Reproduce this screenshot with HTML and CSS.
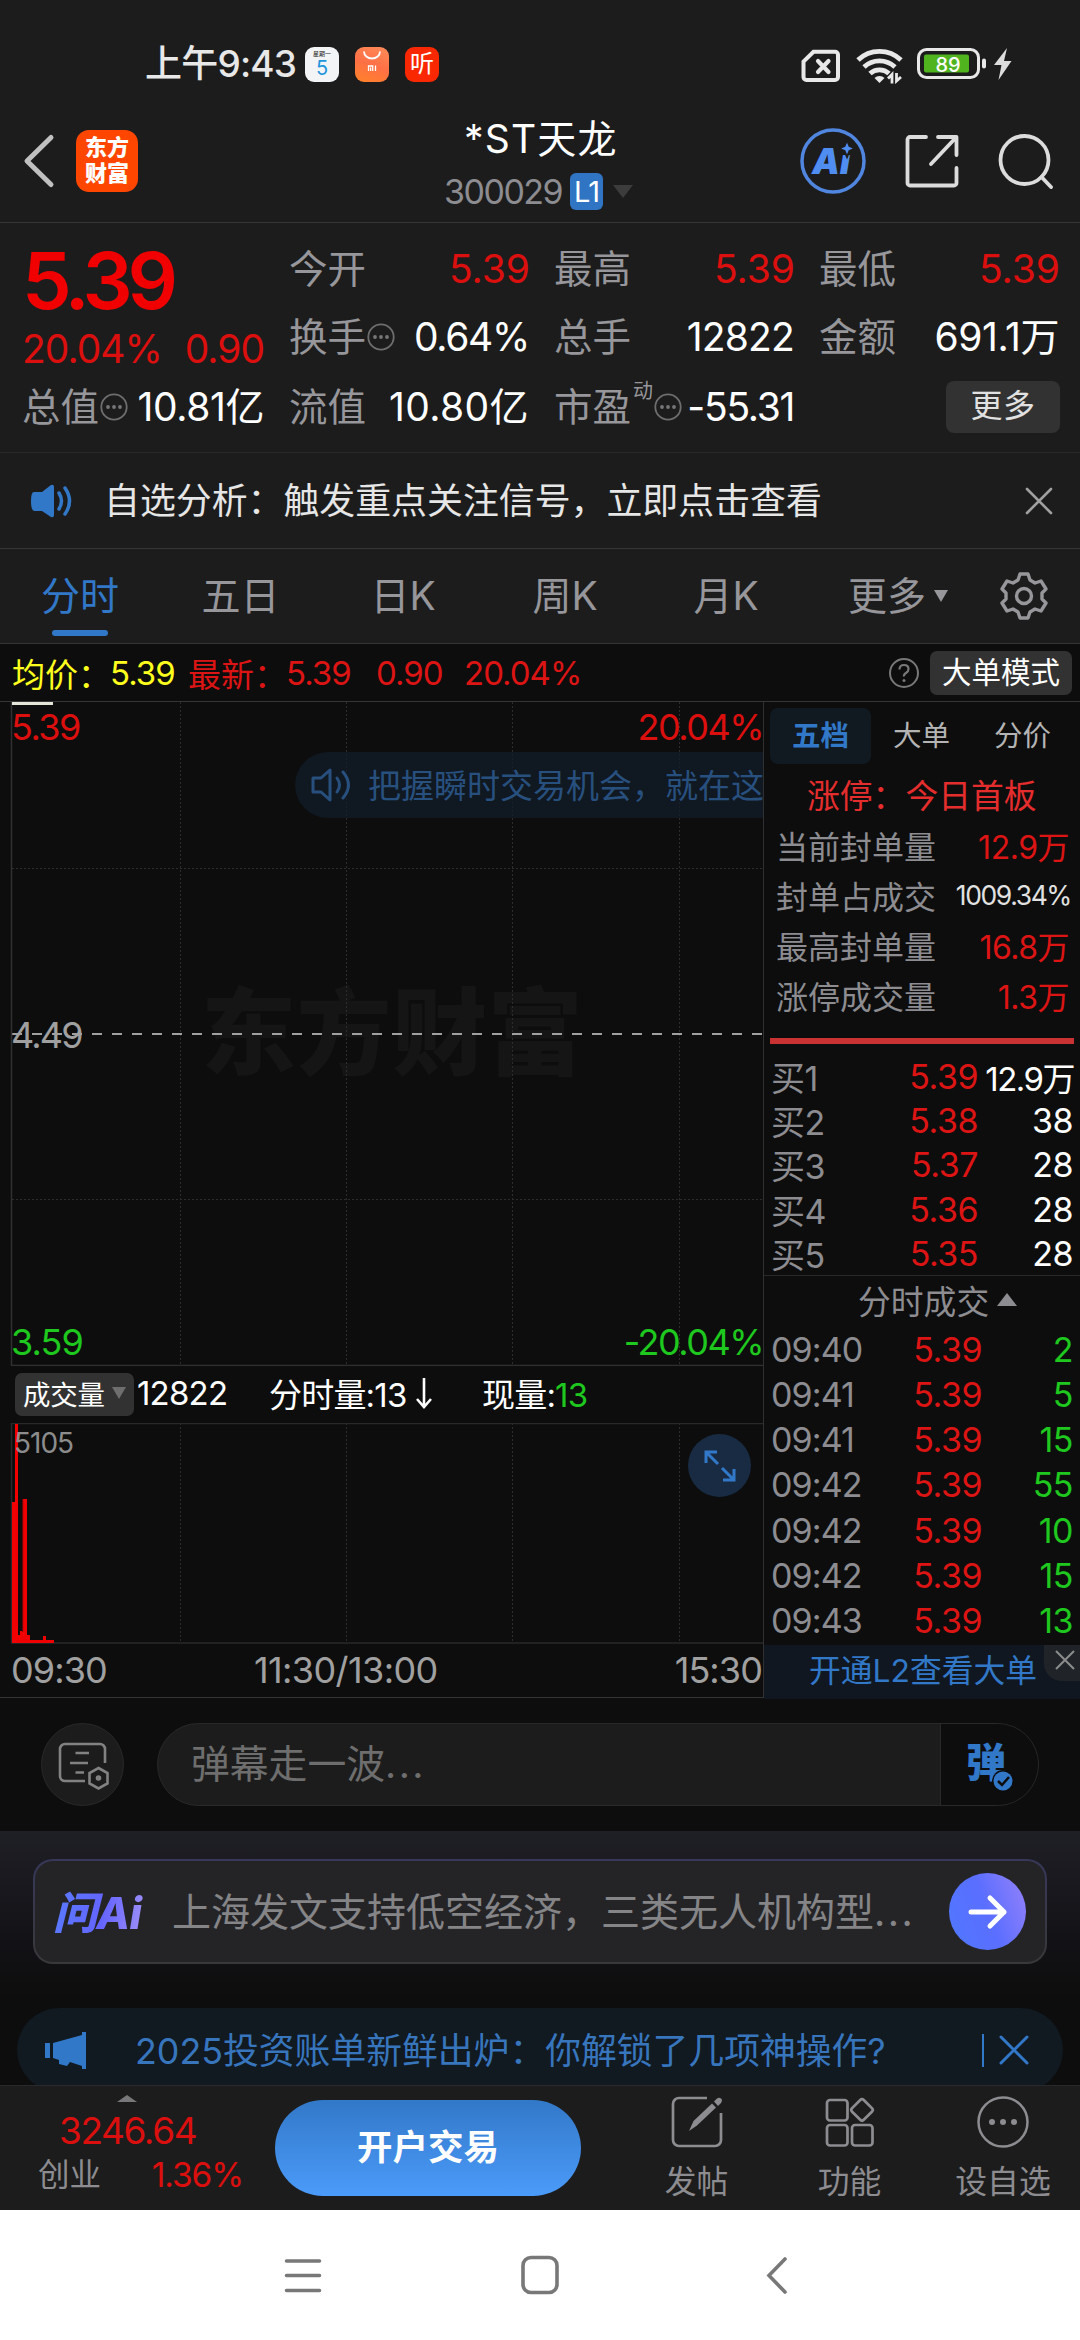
FILE: index.html
```html
<!DOCTYPE html>
<html lang="zh-CN">
<head>
<meta charset="utf-8">
<title>*ST天龙 300029</title>
<link rel="stylesheet" href="styles.css">
</head>
<body>
<div class="screen">

  <div class="status">
    <span class="clock">上午9:43</span>
    <span class="app cal"><i>星期一</i><b>5</b></span>
    <span class="app mi"><svg width="34" height="35" viewBox="0 0 34 35"><path d="M9 4.500a8 7 0 0 0 16 0" fill="none" stroke="#fff" stroke-width="1.800"/><path d="M13.500 24v-5h4.200v5M15.600 20.500v3.500M20.500 18.500v5.500" fill="none" stroke="#fff" stroke-width="1.300"/></svg></span>
    <span class="app ting">听</span>
    <svg class="st-icons" width="215" height="40" viewBox="0 0 215 40" fill="none">
      <path d="M12.500 7.700H34a3 3 0 0 1 3 3V33a3 3 0 0 1-3 3H5.500a3 3 0 0 1-3-3V17.500z" stroke="#e8e8e8" stroke-width="4"/>
      <path d="M17 17l10.500 11M27.500 17L17 28" stroke="#e8e8e8" stroke-width="4.200" stroke-linecap="round"/>
      <g stroke="#e8e8e8" stroke-width="4.800"><path d="M57 16a31 31 0 0 1 43 0M63 23a22.500 22.500 0 0 1 31 0M69 29.500a14 14 0 0 1 19 0"/></g>
      <path d="M73.500 34a7 7 0 0 1 10 0l-5 5z" fill="#e8e8e8"/>
      <path d="M87 34.500l4-4v9M100 33l-4.500 4V29" stroke="#e8e8e8" stroke-width="2.800"/>
      <rect x="117.500" y="5.500" width="60" height="28" rx="8" stroke="#e8e8e8" stroke-width="3"/>
      <rect x="123" y="10.500" width="45" height="18" rx="2" fill="#50b41e"/>
      <rect x="181" y="14.500" width="4" height="10" rx="2" fill="#e8e8e8"/>
      <path d="M206 4L193 21h7.500l-3 15 13-19h-7.500z" fill="#dcdcdc"/>
      <text x="147" y="27.500" text-anchor="middle" class="bat">89</text>
    </svg>
  </div>

  <div class="head">
    <svg class="back" width="34" height="60" viewBox="0 0 34 60"><path d="M30 7.500L6 31l24 23.500" fill="none" stroke="#c0c0c0" stroke-width="5" stroke-linecap="round" stroke-linejoin="round"/></svg>
    <div class="brand"><span>东方</span><span>财富</span></div>
    <div class="title">
      <div class="name">*ST天龙</div>
      <div class="code"><span>300029</span><b>L1</b><svg width="20" height="13"><path d="M0 0h20L10 13z" fill="#3c3c3c"/></svg></div>
    </div>
    <div class="actions">
      <svg width="66" height="66" viewBox="0 0 66 66"><circle cx="33" cy="33" r="31" fill="none" stroke="#5086e0" stroke-width="3.500"/><text x="12" y="46" class="ai">Ai</text><path d="M47 12l2.500 6 6 2.500-6 2.500-2.500 6-2.500-6-6-2.500 6-2.500z" fill="#508df0" stroke="#1c1c1c" stroke-width="2"/></svg>
      <svg width="54" height="56" viewBox="0 0 54 56" fill="none" stroke="#dcdcdc" stroke-width="3.800" stroke-linecap="round" stroke-linejoin="round"><path d="M21 4H5a2.500 2.500 0 0 0-2.500 2.500V50A2.500 2.500 0 0 0 5 52.500h44a2.500 2.500 0 0 0 2.500-2.500V35M33 4h18.500v18M51 4.500L26 31"/></svg>
      <svg width="56" height="56" viewBox="0 0 56 56" fill="none" stroke="#dcdcdc" stroke-width="3.800" stroke-linecap="round"><circle cx="26.500" cy="27" r="24"/><path d="M43.500 44L53 54"/></svg>
    </div>
  </div>

  <div class="quote">
    <div class="qcol first">
      <div class="price">5.39</div>
      <div class="chg"><span>20.04%</span><span>0.90</span></div>
      <div class="kv"><span>总值<svg class="dots" viewBox="0 0 28 28"><use href="#more"/></svg></span><b class="t2">10.81亿</b></div>
    </div>
    <div class="qcol">
      <div class="kv"><span>今开</span><b class="red">5.39</b></div>
      <div class="kv"><span>换手<svg class="dots" viewBox="0 0 28 28"><use href="#more"/></svg></span><b class="t1">0.64%</b></div>
      <div class="kv"><span>流值</span><b class="t3">10.80亿</b></div>
    </div>
    <div class="qcol">
      <div class="kv"><span>最高</span><b class="red">5.39</b></div>
      <div class="kv"><span>总手</span><b>12822</b></div>
      <div class="kv"><span>市盈<sup>动</sup><svg class="dots" viewBox="0 0 28 28"><use href="#more"/></svg></span><b class="t1">-55.31</b></div>
    </div>
    <div class="qcol">
      <div class="kv"><span>最低</span><b class="red">5.39</b></div>
      <div class="kv"><span>金额</span><b class="t2">691.1万</b></div>
      <div class="kv end"><em>更多</em></div>
    </div>
  </div>

  <div class="banner">
    <svg width="44" height="36" viewBox="0 0 44 36"><path d="M3 9h8L20 2q3-1 3 2v28q0 3-3 2L11 28H3Q0 27 0 18T3 9z" fill="#3278c8"/><path d="M28 10q5 8 0 16M34 5q9 13 0 26" fill="none" stroke="#3278c8" stroke-width="3.500" stroke-linecap="round"/></svg>
    <p>自选分析：触发重点关注信号，立即点击查看</p>
    <svg width="28" height="28" viewBox="0 0 28 28"><path d="M2 2l24 24M26 2L2 26" stroke="#a0a0a0" stroke-width="2.600" stroke-linecap="round"/></svg>
  </div>

  <div class="tabs">
    <div class="tab on">分时</div><div class="tab">五日</div><div class="tab">日K</div><div class="tab">周K</div><div class="tab">月K</div>
    <div class="tab more">更多<svg width="14" height="12"><path d="M0 0h14L7 12z" fill="#96969b"/></svg></div>
    <svg class="gear" width="48" height="50" viewBox="0 0 48 50" fill="none" stroke="#96969b" stroke-width="3.400" stroke-linejoin="round"><path d="M20 3h8l2 6 5 3 6-2 5 8-4 4v6l4 4-5 8-6-2-5 3-2 6h-8l-2-6-5-3-6 2-5-8 4-4v-6l-4-4 5-8 6 2 5-3z"/><circle cx="24" cy="25" r="7.500"/></svg>
  </div>

  <div class="info">
    <span class="yel">均价：</span><span class="yel n">5.39</span>
    <span class="lab">最新：</span><span class="n w2">5.39</span><span class="n w3">0.90</span><span class="n">20.04%</span>
    <svg class="help" width="32" height="32" viewBox="0 0 32 32"><circle cx="16" cy="16" r="14" fill="none" stroke="#787878" stroke-width="2"/><path d="M11.500 12.500q0-4.500 4.500-4.500t4.500 4q0 2.500-2.500 4t-2 3.500" fill="none" stroke="#787878" stroke-width="2.200"/><circle cx="16" cy="23.500" r="1.500" fill="#787878"/></svg>
    <em>大单模式</em>
  </div>

  <div class="main">
    <div class="left">
      <div class="chart">
        <div class="mark">东方财富</div>
        <svg class="grid" width="764" height="664" viewBox="0 0 764 664">
          <path d="M180.500 0v664M346.500 0v664M512.500 0v664M679.500 0v664M12 166.500h751M12 497.500h751" stroke="#2d2d2f" stroke-dasharray="2 2"/>
          <path d="M12 332h750" stroke="#a0a0a0" stroke-width="2" stroke-dasharray="10 10"/>
          <path d="M11.500 0v663.500H763" fill="none" stroke="#303032" stroke-width="1.500"/>
          <path d="M12 1.500h41" stroke="#e4e4d8" stroke-width="3"/>
        </svg>
        <div class="tip">
          <svg width="42" height="36" viewBox="0 0 42 36" fill="none" stroke="#28507f" stroke-width="3" stroke-linejoin="round" stroke-linecap="round"><path d="M2 11h8l9-8v30l-9-8H2zM26 11q5 7 0 14M32 5q11 13 0 26"/></svg>
          <span>把握瞬时交易机会，就在这</span>
        </div>
        <span class="lb tl">5.39</span><span class="lb tr">20.04%</span><span class="lb ml">4.49</span><span class="lb bl">3.59</span><span class="lb br">-20.04%</span>
      </div>
      <div class="volhead">
        <em>成交量<svg width="14" height="12"><path d="M0 0h14L7 12z" fill="#6e6e6e"/></svg></em>
        <span class="v1">12822</span><span class="v2">分时量:13<svg width="18" height="32" viewBox="0 0 18 32"><path d="M9 1v28M2 22l7 8 7-8" fill="none" stroke="#fff" stroke-width="2.600"/></svg></span><span class="v3">现量:<i>13</i></span>
      </div>
      <div class="vol">
        <svg class="grid" width="764" height="221" viewBox="0 0 764 221">
          <path d="M180.500 0v220M346.500 0v220M512.500 0v220M679.500 0v220" stroke="#2d2d2f" stroke-dasharray="2 2"/>
          <path d="M11.500 .5H763M11.500 0v220H763" fill="none" stroke="#29292b" stroke-width="1.500"/>
          <path d="M12 220V79h3V1h3v211h2v-4h3V76h4v136h3v5h13v-4h3v4h8v3z" fill="#f00000"/>
          <path d="M22.700 76v133" stroke="#7a0606" stroke-width="1"/>
        </svg>
        <span class="vmax">5105</span>
        <span class="expand"><svg width="32" height="32" viewBox="0 0 32 32" fill="none" stroke="#3278c8" stroke-width="3"><path d="M13 2H2v11M3 3l11 11M19 30h11V19M29 29L18 18"/></svg></span>
      </div>
      <div class="axis"><span>09:30</span><span class="mid">11:30/13:00</span><span>15:30</span></div>
    </div>

    <div class="right">
      <div class="rtabs"><b>五档</b><span>大单</span><span>分价</span></div>
      <div class="limit">涨停：今日首板</div>
      <div class="srow"><span>当前封单量</span><b>12.9万</b></div>
      <div class="srow"><span>封单占成交</span><b class="sm">1009.34%</b></div>
      <div class="srow"><span>最高封单量</span><b>16.8万</b></div>
      <div class="srow"><span>涨停成交量</span><b>1.3万</b></div>
      <div class="bar"></div>
      <div class="bids">
        <div><span>买1</span><i>5.39</i><b class="t1">12.9万</b></div>
        <div><span>买2</span><i>5.38</i><b>38</b></div>
        <div><span>买3</span><i>5.37</i><b>28</b></div>
        <div><span>买4</span><i>5.36</i><b>28</b></div>
        <div><span>买5</span><i>5.35</i><b>28</b></div>
      </div>
      <div class="thead">分时成交<svg width="20" height="13"><path d="M10 0l10 13H0z" fill="#8c8c91"/></svg></div>
      <div class="trades">
        <div><span>09:40</span><i>5.39</i><b>2</b></div>
        <div><span>09:41</span><i>5.39</i><b>5</b></div>
        <div><span>09:41</span><i>5.39</i><b>15</b></div>
        <div><span>09:42</span><i>5.39</i><b>55</b></div>
        <div><span>09:42</span><i>5.39</i><b>10</b></div>
        <div><span>09:42</span><i>5.39</i><b>15</b></div>
        <div><span>09:43</span><i>5.39</i><b>13</b></div>
      </div>
      <div class="l2">开通L2查看大单<span><svg width="20" height="20" viewBox="0 0 20 20"><path d="M1 1l18 18M19 1L1 19" stroke="#8c8c8c" stroke-width="2"/></svg></span></div>
    </div>
  </div>

  <div class="danmu">
    <div class="round"><svg width="52" height="48" viewBox="0 0 52 48" fill="none" stroke="#828282" stroke-width="2.600"><path d="M47 21V7a5 5 0 0 0-5-5H7a5 5 0 0 0-5 5v27a5 5 0 0 0 5 5h20" /><path d="M17.500 11H31M12 21h18M17.500 30.500H26"/><path d="M40.500 26l9 5v10.500l-9 5-9-5V31z"/><circle cx="40.500" cy="36" r="1.500"/></svg></div>
    <div class="field"><span>弹幕走一波<i class="el">...</i></span>
      <div class="send"><b>弹</b><svg width="22" height="22" viewBox="0 0 22 22"><circle cx="11" cy="11" r="11" fill="#0d0d0d"/><circle cx="11" cy="11" r="9.500" fill="#3278c8"/><path d="M6 11l4 4 7-8" fill="none" stroke="#0d0d0d" stroke-width="2.500"/></svg></div>
    </div>
  </div>

  <div class="ask">
    <div class="askbox">
      <b>问Ai</b><p>上海发文支持低空经济，三类无人机构型<i class="el">...</i></p>
      <span class="go"><svg width="40" height="36" viewBox="0 0 40 36" fill="none" stroke="#fff" stroke-width="5" stroke-linecap="round" stroke-linejoin="round"><path d="M3 18h33M22 4l14 14-14 14"/></svg></span>
    </div>
  </div>

  <div class="noticewrap">
    <div class="notice">
      <svg width="42" height="37" viewBox="0 0 42 37" fill="#3278c8"><path d="M0 11h5v15H0zM8 11L37 3V0h4v37h-4v-3L25 30l-3 4-8-2v-4l-6-2z"/></svg>
      <p>2025投资账单新鲜出炉：你解锁了几项神操作?</p>
      <i></i><svg width="30" height="30" viewBox="0 0 30 30"><path d="M2 2l26 26M28 2L2 28" stroke="#3278c8" stroke-width="3" stroke-linecap="round"/></svg>
    </div>
  </div>

  <div class="dock">
    <div class="index">
      <svg width="20" height="7"><path d="M10 0l10 7H0z" fill="#78787a"/></svg>
      <div class="iv">3246.64</div>
      <div class="ip"><span>创业</span><b>1.36%</b></div>
    </div>
    <div class="cta">开户交易</div>
    <div class="act a1"><svg width="52" height="52" viewBox="0 0 52 52" fill="none" stroke="#8c8c91" stroke-width="2.700"><path d="M36 2H8a6 6 0 0 0-6 6v36a6 6 0 0 0 6 6h36a6 6 0 0 0 6-6V17"/><path d="M18 35l4.500-10L41 7.500l4 4-19 18z" fill="#8c8c91" stroke="none"/><path d="M43 5.500l3-3q2-1.500 4 0t0 4.500l-3 3z" fill="#8c8c91" stroke="none"/></svg><span>发帖</span></div>
    <div class="act a2"><svg width="50" height="52" viewBox="0 0 50 52" fill="none" stroke="#8c8c91" stroke-width="2.700"><rect x="2" y="4" width="20.500" height="20.500" rx="3"/><rect x="2" y="29" width="20.500" height="20.500" rx="3"/><rect x="27" y="29" width="20.500" height="20.500" rx="3"/><rect x="28.700" y="5.700" width="16.500" height="16.500" rx="2.500" transform="rotate(45 37 14)"/></svg><span>功能</span></div>
    <div class="act a3"><svg width="52" height="52" viewBox="0 0 52 52"><circle cx="26" cy="26" r="24.500" fill="none" stroke="#8c8c91" stroke-width="2.500"/><g fill="#8c8c91"><circle cx="15" cy="26" r="3"/><circle cx="26" cy="26" r="3"/><circle cx="37" cy="26" r="3"/></g></svg><span>设自选</span></div>
  </div>

  <div class="nav">
    <svg width="40" height="40" viewBox="0 0 40 40" fill="none" stroke="#787878" stroke-width="3.600" stroke-linecap="round"><path d="M3.500 6h33M3.500 20.500h33M3.500 35.500h33"/></svg>
    <svg width="40" height="40" viewBox="0 0 40 40" fill="none" stroke="#787878" stroke-width="3.600"><rect x="3" y="2.500" width="34" height="35" rx="8"/></svg>
    <svg width="40" height="40" viewBox="0 0 40 40" fill="none" stroke="#787878" stroke-width="3.600" stroke-linecap="round"><path d="M28 4L12 20.500 28 37"/></svg>
  </div>
</div>

<svg width="0" height="0" class="defs"><defs><g id="more"><circle cx="14" cy="14" r="12.700" fill="none" stroke="#6e6e70" stroke-width="1.800"/><circle cx="8" cy="14" r="1.900" fill="#77777a"/><circle cx="14" cy="14" r="1.900" fill="#77777a"/><circle cx="20" cy="14" r="1.900" fill="#77777a"/></g></defs></svg>
</body>
</html>
```
FILE: styles.css
```css
* { box-sizing: border-box; margin: 0; padding: 0; }
body { background: #0d0d0d; font-family: Inter, "Noto Sans CJK SC", sans-serif; color: #fff; }
b, em, i { font-weight: 400; font-style: normal; }
svg { display: block; flex: none; }
.defs { position: absolute; }
.screen { width: 1080px; height: 2340px; overflow: hidden; display: flex; flex-direction: column; white-space: nowrap; }
.screen > div { flex: none; }

.status { height: 100px; padding: 28px 0 0 145px; background: #1c1c1c; display: flex; align-items: center; }
.status > * { flex: none; }
.clock { width: 160px; font-size: 37px; line-height: 40px; font-weight: 500; color: #e8e8e8; letter-spacing: -.8px; }
.app { width: 34px; height: 35px; margin-right: 16px; border-radius: 9px; overflow: hidden; display: flex; flex-direction: column; align-items: center; }
.cal { background: #f2f4f6; }
.cal i { font-size: 6px; line-height: 8px; margin-top: 3px; color: #222; }
.cal b { font-size: 20px; line-height: 20px; color: #1e96dc; }
.mi { background: linear-gradient(20deg, #ff8228, #ff7046 50%, #ff8c5a); }
.ting { background: #fa2800; font-size: 24px; line-height: 33px; }
.st-icons { margin-left: 346px; }
.bat { font: 500 20px Inter, sans-serif; fill: #fff; }

.head { height: 123px; background: #1c1c1c; border-bottom: 1px solid #353537; display: grid; grid-template-columns: 21px 55px 62px 307px 190px 1fr; }
.back { grid-column: 2; align-self: start; margin-top: 30px; }
.brand { grid-column: 3; width: 62px; height: 62px; margin-top: 30px; padding-top: 4px; border-radius: 13px; background: #ff4600; text-align: center; font-size: 22px; line-height: 26px; font-weight: 900; }
.brand span { display: block; }
.title { grid-column: 5; padding-top: 15px; }
.name { font-size: 39px; line-height: 48px; padding-left: 19px; letter-spacing: 1.200px; }
.code { display: flex; align-items: center; height: 40px; margin-top: 8px; font-size: 34px; color: #8c8c91; letter-spacing: -1.5px; }
.code span { width: 126px; margin-left: -1px; }
.code b { width: 33px; height: 37px; line-height: 37px; border-radius: 6px; background: #3074c4; color: #fff; font-size: 29px; text-align: center; margin-right: 10px; letter-spacing: -1px; }
.actions { grid-column: 6; padding: 28px 26px 0 0; display: flex; justify-content: flex-end; gap: 39px; height: 94px; align-items: center; }
.ai { font: italic 900 35px Inter, sans-serif; fill: #508df0; letter-spacing: 0; }

.quote { height: 230px; padding: 12px 22px 0 24px; background: #1c1c1c; border-bottom: 1px solid #29292b; display: flex; gap: 25px; }
.qcol { width: 240px; flex: none; }
.first { width: 242px; margin: 0 0 0 -2px; }
.price { height: 90px; line-height: 90px; font-size: 79px; font-weight: 600; color: #f00000; letter-spacing: -5.300px; }
.chg { height: 46px; line-height: 48px; display: flex; justify-content: space-between; font-size: 39px; color: #dc0f0f; letter-spacing: -1px; }
.kv { height: 68px; display: flex; align-items: center; justify-content: space-between; font-size: 39px; line-height: 68px; letter-spacing: -.8px; }
.kv:last-child { padding-top: 3px; }
.kv span { color: #96969b; display: flex; align-items: center; font-size: 38.500px; letter-spacing: 0; }
.kv .t1 { letter-spacing: -1.3px; }
.kv .t2 { letter-spacing: -.4px; }
.kv .t3 { letter-spacing: .4px; }
.kv sup { font-size: 20px; line-height: 20px; margin: -32px 0 0 2px; align-self: center; }
.dots { width: 28px; height: 28px; margin-left: 1px; }
.kv .red { color: #dc0f0f; letter-spacing: 0; margin-right: -1px; }
.kv.end { justify-content: flex-end; padding-top: 0; }
.kv em { width: 114px; height: 52px; line-height: 50px; border-radius: 8px; background: #323232; color: #e1e1e1; text-align: center; font-size: 32px; letter-spacing: .5px; margin: 3px -1px 0 0; }

.banner { height: 96px; padding: 0 27px 0 31px; background: #1c1c1c; border-bottom: 1px solid #353537; display: flex; align-items: center; }
.banner p { flex: 1; margin: -5px 0 0 29px; font-size: 35.900px; color: #e6e6e6; }

.tabs { height: 95px; background: #1c1c1c; border-bottom: 1px solid #353537; display: grid; grid-template-columns: 160px 161px 164px 160px 162px 182px 1fr; align-items: center; }
.tab { height: 94px; line-height: 94px; text-align: center; font-size: 39px; color: #96969b; position: relative; }
.on { color: #3278c8; }
.on::after { content: ""; position: absolute; left: 52px; bottom: 7px; width: 56px; height: 6px; border-radius: 3px; background: #3278c8; }
.more { display: flex; align-items: center; justify-content: center; gap: 8px; }
.gear { margin-left: 11px; }

.info { height: 58px; padding: 0 8px 0 12px; border-bottom: 1px solid #353537; display: flex; align-items: center; font-size: 33px; color: #dc1414; }
.info .yel { color: #ffff1e; }
.info > span:first-child { width: 98px; }
.info .n { letter-spacing: -1px; }
.info .n.yel { width: 78px; }
.lab { width: 98px; }
.w2 { width: 90px; }
.w3 { width: 88px; }
.help { margin: 0 10px 0 auto; }
.info em { width: 142px; height: 44px; line-height: 42px; border-radius: 7px; background: #323232; color: #fff; text-align: center; font-size: 29.500px; }

.main { height: 996px; border-bottom: 1px solid #353537; display: flex; }
.left { width: 764px; border-right: 1px solid #303032; flex: none; }
.chart { position: relative; height: 664px; overflow: hidden; }
.mark { position: absolute; left: 201px; top: 262px; font-size: 95px; line-height: 140px; font-weight: 900; color: #151515; letter-spacing: .6px; }
.grid { position: absolute; left: 0; top: 0; }
.lb { position: absolute; font-size: 36px; line-height: 40px; letter-spacing: -1.5px; color: #dc0f0f; }
.tl { left: 11px; top: 5px; } .tr { right: 0; top: 5px; }
.ml { left: 11px; top: 313px; color: #a0a0a0; letter-spacing: -1.8px; }
.bl { left: 11px; top: 620px; color: #1ec81e; letter-spacing: -.9px; } .br { right: 0; top: 620px; color: #1ec81e; }
.tip { position: absolute; left: 295px; right: 0; top: 50px; height: 66px; border-radius: 33px 0 0 33px; background: rgba(18, 28, 40, .75); display: flex; align-items: center; padding-left: 16px; gap: 15px; font-size: 33px; color: #28507f; }
.tip span { margin-top: -3px; }
.volhead { height: 57px; display: flex; align-items: center; padding-left: 15px; font-size: 33px; letter-spacing: -.8px; }
.volhead em { width: 119px; height: 43px; border-radius: 7px; background: #323232; display: flex; align-items: center; justify-content: space-between; padding: 0 8px 4px 8px; font-size: 27.500px; letter-spacing: -.3px; }
.v1, .v2, .v3 { margin-top: -4px; }
.v1 { width: 132px; padding-left: 3px; }
.v2 { width: 213px; padding-left: 3px; display: flex; align-items: center; gap: 8px; }
.v3 { padding-left: 3px; }
.v3 i { color: #1ec81e; }
.vol { position: relative; height: 221px; }
.vmax { position: absolute; left: 14px; top: 5px; font-size: 28px; line-height: 30px; color: #8c8c8c; letter-spacing: -1px; }
.expand { position: absolute; left: 688px; top: 11px; width: 63px; height: 63px; border-radius: 50%; background: #182b42; display: flex; align-items: center; justify-content: center; }
.axis { height: 53px; padding: 0 1px 2px 11px; display: grid; grid-template-columns: 243px 1fr auto; align-items: center; font-size: 36px; color: #a0a0a0; letter-spacing: -.9px; }
.axis .mid { letter-spacing: -.6px; }

.right { flex: 1; min-width: 0; }
.rtabs { height: 67px; padding: 6px 7px 0 6px; display: grid; grid-template-columns: 101px 101px 101px; line-height: 56px; text-align: center; font-size: 28.500px; color: #b4b4b4; }
.rtabs b { height: 56px; border-radius: 8px; background: #111921; color: #3278c8; font-weight: 700; }
.limit { height: 51px; line-height: 54px; padding-left: 43px; font-size: 32.800px; color: #e62d2d; }
.srow { height: 50px; padding: 0 11px 0 12px; display: flex; align-items: center; justify-content: space-between; font-size: 32px; color: #8c8c91; }
.srow b { color: #dc1414; letter-spacing: -.5px; }
.srow .sm { color: #e1e1e1; font-size: 26.500px; margin-right: -2px; letter-spacing: -1.4px; }
.bar { height: 6px; margin: 18px 6px 8px; background: #c83232; }
.bids { height: 224px; border-bottom: 1px solid #29292b; }
.bids > div, .trades > div { height: 44.200px; display: grid; grid-template-columns: 100px 107px 1fr; align-items: center; padding: 0 7px 0 7px; font-size: 34px; color: #8c8c91; letter-spacing: -.5px; }
.bids i, .trades i { color: #dc1414; text-align: right; }
.bids b { color: #fff; text-align: right; }
.bids .t1 { font-size: 33px; letter-spacing: -1.5px; margin-right: -1px; }
.thead { height: 53px; padding: 0 0 7px 94px; display: flex; align-items: center; gap: 8px; font-size: 32.800px; color: #8c8c91; }
.thead svg { margin-top: 1px; }
.trades { margin-top: -2px; padding-bottom: 2px; }
.trades > div { height: 45.140px; grid-template-columns: 105px 106px 1fr; }
.trades span { letter-spacing: -.9px; }
.trades b { color: #1ec81e; text-align: right; }
.l2 { position: relative; height: 54px; line-height: 52px; padding-left: 45px; background: #101720; color: #3278c8; font-size: 31.800px; }
.l2 span { position: absolute; right: 0; top: 0; width: 36px; height: 36px; border-radius: 0 0 0 18px; background: #202428; display: flex; align-items: center; justify-content: center; padding: 0 0 5px 5px; }

.danmu { height: 133px; padding: 25px 41px 25px; display: flex; gap: 33px; }
.round { width: 83px; height: 83px; border-radius: 50%; border: 1px solid #29292b; background: #1c1c1c; display: flex; align-items: center; justify-content: center; padding: 2px 0 0 2px; flex: none; }
.field { width: 882px; height: 83px; border: 1px solid #29292b; border-radius: 42px; background: #1c1c1c; display: flex; overflow: hidden; flex: none; }
.field span { flex: 1; padding-left: 33px; font-size: 38.800px; line-height: 80px; color: #6e6e6e; }
.el { letter-spacing: 2.500px; }
.send { position: relative; width: 98px; background: #0d0d0d; border-left: 1px solid #29292b; }
.send b { display: block; padding-left: 25px; font-size: 40px; line-height: 78px; font-weight: 900; color: #3278c8; }
.send svg { position: absolute; left: 51px; top: 46px; }

.ask { height: 168px; padding: 28px 33px 0; background: linear-gradient(#1f1f26, #141419 55%, #0d0d0d); }
.askbox { height: 105px; border: 2px solid transparent; border-radius: 20px; background: linear-gradient(#242427, #242427) padding-box, linear-gradient(#37385a, #38383a) border-box; display: flex; align-items: center; }
.askbox b { width: 122px; padding: 0 0 3px 18px; font-size: 44px; font-style: italic; font-weight: 800; letter-spacing: -.7px; background: linear-gradient(100deg, #5a78ff 20%, #6464ff 55%, #b4a0f5); -webkit-background-clip: text; background-clip: text; color: transparent; }
.askbox p { flex: 1; margin-top: -5px; padding-left: 15px; font-size: 39px; color: #858587; }
.go { width: 77px; height: 77px; margin-right: 19px; border-radius: 50%; background: linear-gradient(70deg, #5078ff, #5a6eff 50%, #9682fa); display: flex; align-items: center; justify-content: center; }

.noticewrap { height: 86px; padding: 9px 17px 0; overflow: hidden; }
.notice { height: 84px; border-radius: 42px; background: #111921; display: flex; align-items: center; padding: 0 34px 0 28px; }
.notice p { flex: 1; margin: -4px 0 0 48px; font-size: 35.800px; color: #3775bd; }
.notice i { width: 2px; height: 33px; background: #3278c8; margin-right: 15px; }

.dock { height: 125px; background: #1c1c1c; border-top: 1px solid #29292b; display: flex; }
.index { width: 275px; padding: 9px 0 0 38px; }
.index svg { margin-left: 79px; }
.iv { margin: 7px 0 0 21px; font-size: 37px; line-height: 44px; color: #dc0f0f; letter-spacing: -1.4px; }
.ip { width: 205px; display: flex; justify-content: space-between; font-size: 33.500px; line-height: 44px; }
.ip span { color: #8c8c91; font-size: 31.500px; }
.ip b { color: #dc0f0f; letter-spacing: -1.1px; }
.cta { width: 306px; height: 96px; margin: 14px 39px 0 0; border-radius: 48px; background: linear-gradient(#3278c8, #4b9bfa); text-align: center; font-size: 35.500px; line-height: 95px; font-weight: 700; flex: none; }
.index, .act { flex: none; }
.act { display: flex; flex-direction: column; align-items: center; padding-top: 10px; font-size: 31.800px; line-height: 44px; color: #8c8c91; }
.act span { margin-top: 12px; }
.a1 { width: 153px; } .a2 { width: 153px; } .a3 { width: 154px; }

.nav { height: 130px; background: #fff; display: flex; justify-content: center; gap: 197px; padding-top: 45px; }
```
